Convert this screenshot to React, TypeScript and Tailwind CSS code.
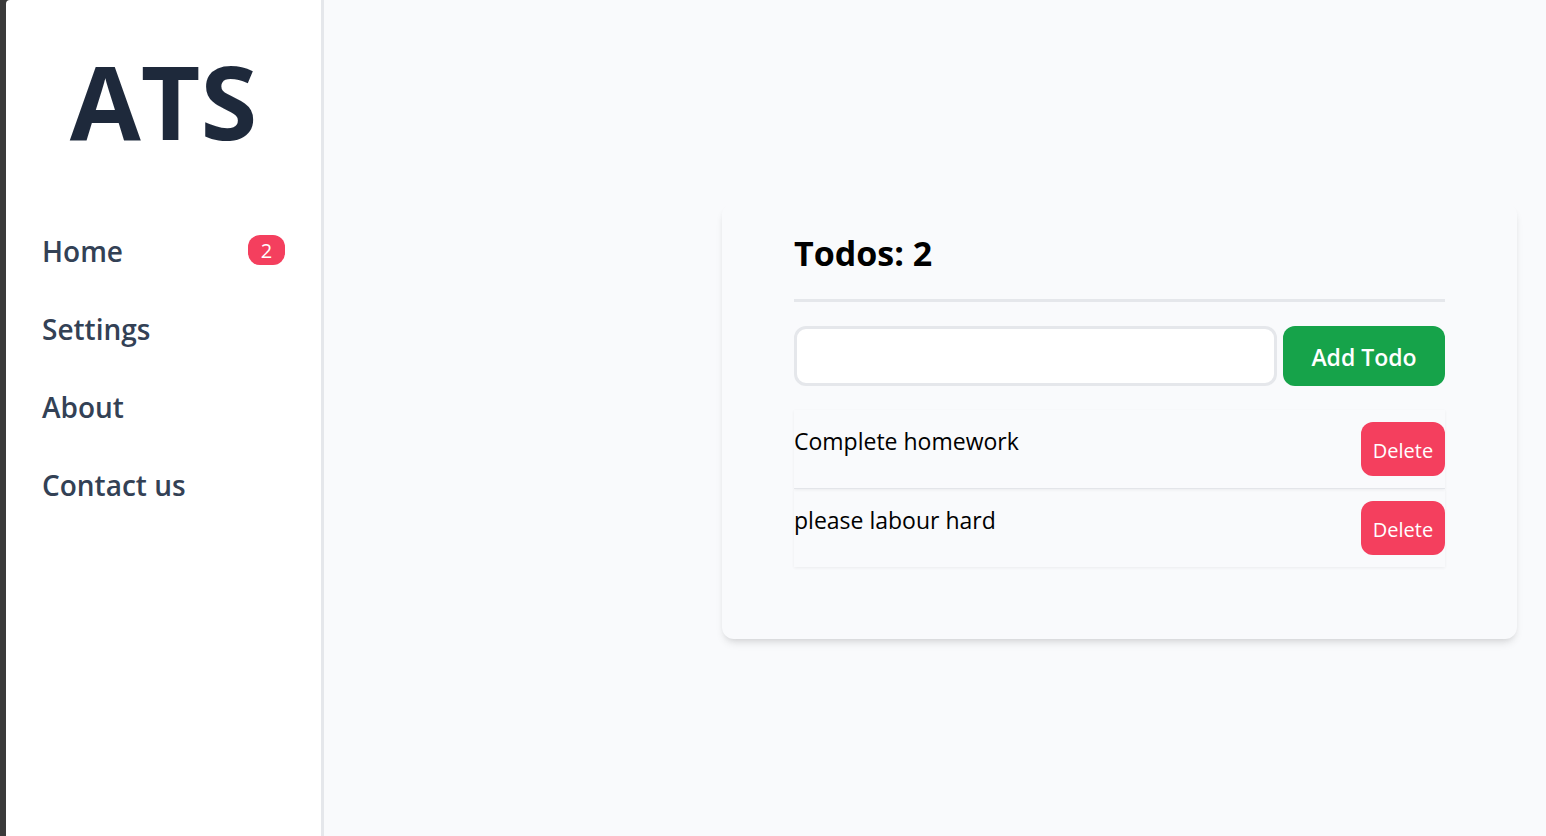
import { useState, type FormEvent } from "react";

type Todo = { id: number; text: string };

const links = ["Home", "Settings", "About", "Contact us"];

function Sidebar({ count }: { count: number }) {
  return (
    <aside className="w-[318px] shrink-0 rounded-tl-sm border-r-3 border-[#e5e7eb] bg-white px-9 pt-7">
      <h1 className="text-center text-[103px] leading-[144px] font-bold text-[#1e293b]">ATS</h1>
      <nav className="mt-[58px]">
        <ul className="flex flex-col gap-9">
          {links.map((link) => (
            <li key={link} className="flex h-[42px] items-center justify-between">
              <a href="#" className="text-[28px] leading-[42px] font-semibold text-[#334155]">
                {link}
              </a>
              {link === "Home" && (
                <span className="mb-0.5 flex h-[30px] min-w-[37px] items-center justify-center rounded-xl bg-[#f43f5e] px-3 pt-0.5 text-xl leading-[30px] font-medium text-white">
                  {count}
                </span>
              )}
            </li>
          ))}
        </ul>
      </nav>
    </aside>
  );
}

export default function App() {
  const [todos, setTodos] = useState<Todo[]>([
    { id: 1, text: "Complete homework" },
    { id: 2, text: "please labour hard" },
  ]);
  const [draft, setDraft] = useState("");

  const addTodo = (event: FormEvent) => {
    event.preventDefault();
    const text = draft.trim();
    if (!text) return;
    setTodos([...todos, { id: Date.now(), text }]);
    setDraft("");
  };

  return (
    <div className="flex min-h-screen bg-[#3a3a3a] pl-1.5 font-['Open_Sans','Noto_Sans',sans-serif]">
      <Sidebar count={todos.length} />
      <main className="flex flex-1 items-center justify-end bg-[#f9fafc] pt-1.5 pr-[29px]">
        <section className="w-[795px] rounded-xl bg-[#f9fafc] px-[72px] pt-6 pb-[72px] shadow-[0_6px_9px_-2px_rgb(0_0_0/0.1),0_3px_6px_-3px_rgb(0_0_0/0.1)]">
          <h2 className="border-b-3 border-[#e5e7eb] pb-5 text-[34px] leading-[52px] font-bold text-black">
            Todos: {todos.length}
          </h2>
          <form onSubmit={addTodo} className="mt-6 flex gap-1.5">
            <input
              type="text"
              aria-label="New todo"
              value={draft}
              onChange={(event) => setDraft(event.target.value)}
              className="h-[60px] min-w-0 flex-1 rounded-xl border-3 border-[#e5e7eb] bg-white px-3 text-2xl outline-none"
            />
            <button
              type="submit"
              className="h-[60px] w-[162px] rounded-xl bg-[#16a34a] pt-0.5 text-[23px] font-semibold text-white"
            >
              Add Todo
            </button>
          </form>
          <ul className="mt-6 divide-y divide-[#e5e7eb]">
            {todos.map((todo) => (
              <li
                key={todo.id}
                className="flex items-start justify-between py-3 shadow-[0_1px_3px_rgb(0_0_0/0.06)]"
              >
                <span className="text-[23px] leading-[38px] text-black">{todo.text}</span>
                <button
                  type="button"
                  onClick={() => setTodos(todos.filter((item) => item.id !== todo.id))}
                  className="h-[54px] w-[84px] rounded-xl bg-[#f43f5e] pt-1 text-xl text-white"
                >
                  Delete
                </button>
              </li>
            ))}
          </ul>
        </section>
      </main>
    </div>
  );
}
